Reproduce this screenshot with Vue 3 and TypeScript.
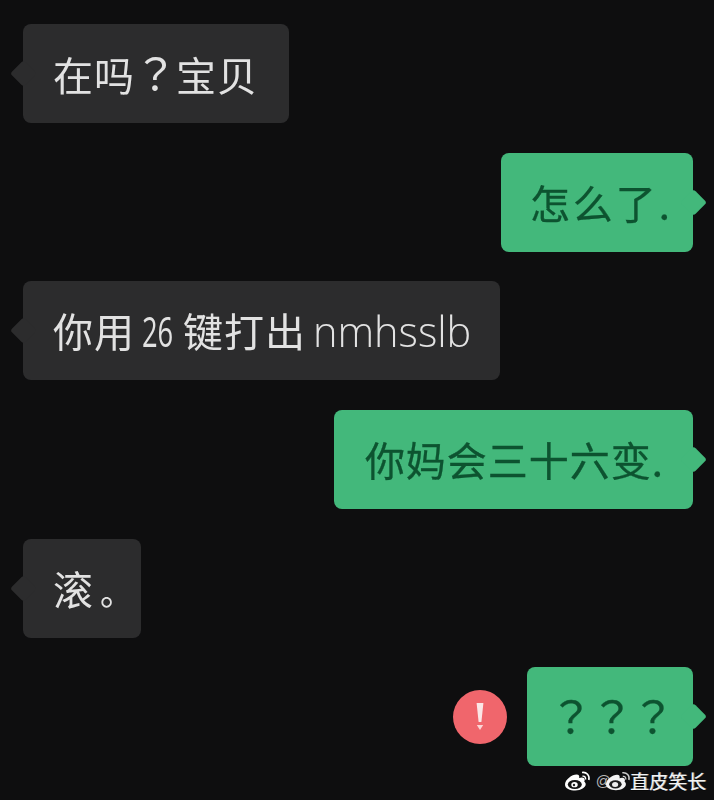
<template>
  <div class="chat">
    <div
      v-for="msg in messages"
      :key="msg.id"
      :class="['row', msg.mine ? 'mine' : 'theirs']"
    >
      <div v-if="msg.failed" class="alert">
        <svg width="54" height="54" viewBox="0 0 54 54">
          <circle cx="27" cy="27" r="27" fill="#f0666c" />
          <path d="M23.6 13h6.800l-2 19h-2.800z" fill="#fbe6e6" />
          <path d="M23.800 35h6.400l-3.200 5z" fill="#fbd6d6" />
        </svg>
      </div>
      <div :class="['bubble', msg.mine ? 'green' : 'dark', msg.cls]">
        <span class="body" v-html="msg.html"></span>
      </div>
    </div>

    <div class="watermark">
      <svg class="weibo" width="27" height="20" viewBox="0 0 27 20">
        <path
          d="M1 13.500C1 8.500 8 3.500 12.500 3.500c2.600 0 3.200 1.800 2.600 3.600 3-1 5.600-.6 5.600 2 0 .8-.4 1.600-.4 1.600 1 .6 1.400 1.600 1.400 2.600 0 3.200-4.600 6.200-10.400 6.200C6 19.500 1 17.500 1 13.500z"
          fill="#fff"
        />
        <ellipse cx="10.800" cy="13.500" rx="7" ry="4.500" fill="#151515" />
        <ellipse cx="10.500" cy="13.700" rx="3.200" ry="2.600" fill="#fff" />
        <circle cx="10" cy="14" r="1.200" fill="#222" />
        <path d="M18 1.500c4.500-.8 8 3 6.800 7.500" fill="none" stroke="#fff" stroke-width="1.600" />
        <path d="M18.500 5.200c2.300-.3 3.500 1.500 3 3.300" fill="none" stroke="#fff" stroke-width="1.400" />
      </svg>
      <span class="mark-text">
        <span class="at">@</span>
        <svg class="weibo small" width="26" height="20" viewBox="0 0 27 20">
          <path
            d="M1 13.500C1 8.500 8 3.500 12.500 3.500c2.600 0 3.200 1.800 2.600 3.600 3-1 5.600-.6 5.600 2 0 .8-.4 1.600-.4 1.600 1 .6 1.400 1.600 1.400 2.600 0 3.200-4.600 6.200-10.400 6.200C6 19.500 1 17.500 1 13.500z"
            fill="#f4f4f4"
          />
          <ellipse cx="10.800" cy="13.500" rx="6.500" ry="4.200" fill="#1c1c1c" />
          <ellipse cx="10.500" cy="13.700" rx="3.200" ry="2.600" fill="#eee" />
          <path d="M18 1.500c4.500-.8 8 3 6.800 7.500" fill="none" stroke="#ccc" stroke-width="1.500" />
          <path d="M18.500 5.200c2.300-.3 3.500 1.500 3 3.300" fill="none" stroke="#ccc" stroke-width="1.300" />
        </svg>
        <span class="handle">直皮笑长</span>
      </span>
    </div>
  </div>
</template>

<script setup lang="ts">
interface Message {
  id: number;
  mine: boolean;
  html: string;
  cls?: string;
  failed?: boolean;
}

const messages: Message[] = [
  { id: 1, mine: false, html: '在吗<span class="full">？</span>宝贝', cls: "first" },
  { id: 2, mine: true, html: "怎么了.", cls: "short" },
  {
    id: 3,
    mine: false,
    html: '你用 <span class="num">26</span> 键打出 <span class="latin">nmhsslb</span>',
    cls: "mixed",
  },
  { id: 4, mine: true, html: "你妈会三十六变." },
  { id: 5, mine: false, html: '滚<span class="period">。</span>' },
  {
    id: 6,
    mine: true,
    html: '<span class="qs">？？？</span>',
    failed: true,
  },
];
</script>

<style>
html,
body {
  margin: 0;
  background: #0e0e0f;
}
</style>

<style scoped>
.chat {
  position: relative;
  box-sizing: border-box;
  width: 714px;
  height: 800px;
  overflow: hidden;
  padding: 24px 21px 0 23px;
  display: flex;
  flex-direction: column;
  gap: 29.65px;
  background: #0e0e0f;
  font-family: "Noto Sans CJK SC", "Noto Sans", sans-serif;
}
.row {
  display: flex;
  align-items: center;
  height: 99px;
}
.row.mine {
  justify-content: flex-end;
}
.alert {
  display: flex;
  margin-right: 20px;
}
.bubble {
  position: relative;
  display: flex;
  align-items: center;
  box-sizing: border-box;
  height: 99px;
  padding: 0 30px;
  border-radius: 8px;
  font-size: 40px;
  line-height: 1;
  letter-spacing: 1px;
  white-space: nowrap;
}
.body {
  position: relative;
  z-index: 1;
  filter: blur(0.4px);
}
.dark {
  background: #2c2c2d;
  color: #e2e2e2;
}
.dark.first {
  padding-right: 31px;
}
.dark.mixed {
  padding-right: 29px;
}
.green {
  background: #43b87b;
  color: #0d5330;
  padding: 0 29px 0 31px;
  -webkit-text-stroke: 0.3px #0d5330;
}
.green.short {
  padding: 0 20px 0 29px;
  letter-spacing: 3px;
}
.bubble::after {
  content: "";
  position: absolute;
  top: 50%;
  width: 19px;
  height: 19px;
  margin-top: -9.5px;
  border-radius: 3px;
  background: inherit;
  transform: rotate(45deg);
}
.dark::after {
  left: -9.5px;
}
.green::after {
  right: -9.5px;
}
.bubble :deep(.full) {
  display: inline-block;
  margin: 0 -1.5px;
  font-family: "Noto Sans CJK JP", sans-serif;
  font-size: 44px;
  line-height: 0;
  letter-spacing: 0;
}
.bubble :deep(.num) {
  display: inline-block;
  margin: 0 -17px 0 -3px;
  font-family: "Open Sans", sans-serif;
  font-weight: 400;
  font-size: 42px;
  letter-spacing: 0;
  transform: scaleX(0.65);
  transform-origin: left center;
}
.bubble :deep(.latin) {
  margin-left: -3px;
  font-family: "Open Sans", sans-serif;
  font-weight: 300;
  font-size: 41.5px;
  letter-spacing: 0;
}
.bubble :deep(.period) {
  display: inline-block;
  width: 17px;
  padding-left: 6px;
  box-sizing: border-box;
  font-size: 34px;
  letter-spacing: 0;
}
.bubble :deep(.qs) {
  display: inline-block;
  margin: 0 -8px 0 -9px;
  font-family: "Noto Sans CJK JP", sans-serif;
  font-size: 44px;
  line-height: 0;
  letter-spacing: -3px;
}
.watermark {
  position: absolute;
  right: 8px;
  bottom: 9px;
  display: flex;
  align-items: center;
  gap: 5px;
  color: #f2f2f2;
  font-size: 19px;
  line-height: 20px;
}
.mark-text {
  display: flex;
  align-items: center;
}
.at {
  font-family: "Liberation Sans", sans-serif;
  font-size: 15px;
  margin-right: -6px;
  color: #b5b5b5;
}
.small {
  margin-right: -1px;
}
.handle {
  text-shadow: 1px 0 0 rgba(242, 242, 242, 0.6), 0 1px 0 rgba(0, 0, 0, 0.5);
}
</style>
